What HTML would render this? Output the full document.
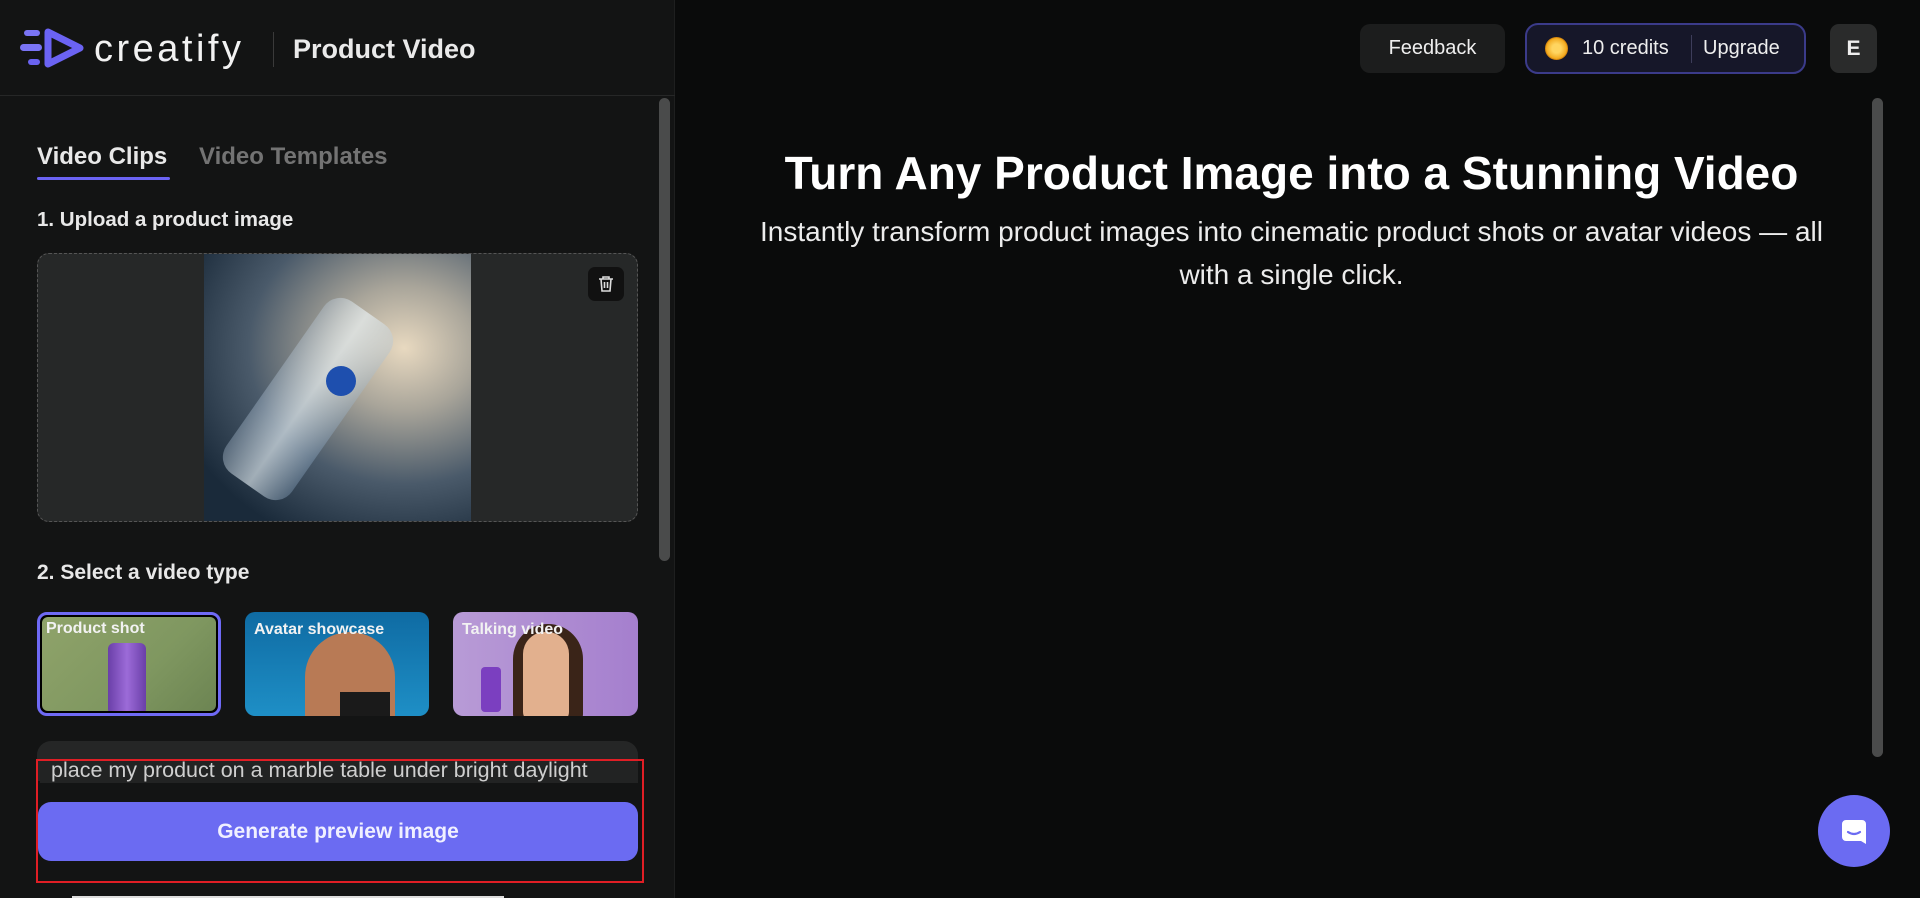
<!DOCTYPE html>
<html><head><meta charset="utf-8">
<style>
*{box-sizing:border-box;margin:0;padding:0}
body{width:1920px;height:898px;overflow:hidden;background:#0a0b0b;font-family:"Liberation Sans",sans-serif;color:#fff;position:relative}
.left{position:absolute;left:0;top:0;width:675px;height:898px;background:#131414;border-right:1px solid #1e1f1f}
.hdr{position:absolute;left:0;top:0;width:675px;height:96px;border-bottom:1px solid #262727}
.abs{position:absolute}
</style></head><body>
<div class="left">
 <div class="hdr">
  <svg class="abs" style="left:20px;top:28px" width="66" height="40" viewBox="0 0 66 40">
   <rect x="4" y="2" width="16" height="6" rx="3" fill="#7a74f5"/>
   <rect x="0" y="16" width="22" height="7" rx="3.5" fill="#7a74f5"/>
   <rect x="8" y="31" width="12" height="6" rx="3" fill="#6a63f0"/>
   <path d="M28 4 L60 20 L28 36 Z" fill="none" stroke="#6b63f3" stroke-width="7" stroke-linejoin="round"/>
  </svg>
  <div class="abs" style="left:94px;top:28px;font-size:38px;letter-spacing:3.5px;color:#f2f2f2">creatify</div>
  <div class="abs" style="left:273px;top:32px;width:1px;height:35px;background:#3a3a3a"></div>
  <div class="abs" style="left:293px;top:34px;font-size:27px;font-weight:bold;color:#eaeaea">Product Video</div>
 </div>
 <div class="abs" style="left:37px;top:143px;font-size:24px;font-weight:bold;color:#e8e8e8">Video Clips</div>
 <div class="abs" style="left:37px;top:177px;width:133px;height:3px;background:#6b63f3;border-radius:2px"></div>
 <div class="abs" style="left:199px;top:143px;font-size:24px;font-weight:bold;color:#737373">Video Templates</div>
 <div class="abs" style="left:37px;top:208px;font-size:20.5px;font-weight:bold;color:#e8e8e8">1. Upload a product image</div>
 <div class="abs" style="left:37px;top:253px;width:601px;height:269px;background:#262828;border:1.5px dashed #555;border-radius:12px;overflow:hidden">
  <div class="abs" style="left:166px;top:0;width:267px;height:269px;background:radial-gradient(ellipse at 75% 35%,#e8d9c0 0%,#a9a59a 25%,#4a5a6a 55%,#1a2a3a 85%);"></div>
  <div class="abs" style="left:230px;top:40px;width:80px;height:210px;transform:rotate(35deg);background:linear-gradient(90deg,rgba(200,220,240,.3),rgba(240,250,255,.6),rgba(160,190,220,.3));border-radius:20px"></div>
  <div class="abs" style="left:288px;top:112px;width:30px;height:30px;border-radius:50%;background:#1e4fae"></div>
  <div class="abs" style="left:550px;top:13px;width:36px;height:34px;border-radius:7px;background:#111"></div>
  <svg class="abs" style="left:559px;top:21px" width="18" height="18" viewBox="0 0 18 18" fill="none" stroke="#ddd" stroke-width="1.6"><path d="M2 4h14M6 4V2h6v2M4 4l1 12h8l1-12M7.5 7v6M10.5 7v6"/></svg>
 </div>
 <div class="abs" style="left:37px;top:561px;font-size:21px;font-weight:bold;color:#e8e8e8">2. Select a video type</div>
 <div class="abs" style="left:37px;top:612px;width:184px;height:104px;border:3px solid #6f6af5;border-radius:10px;padding:2px;background:#000">
  <div style="width:100%;height:100%;border-radius:6px;background:linear-gradient(135deg,#8fa36a,#7f9760 60%,#6c8452);position:relative;overflow:hidden">
   <div class="abs" style="left:66px;top:26px;width:38px;height:72px;border-radius:6px;background:linear-gradient(90deg,#6a3fa8,#9c6bd8,#6a3fa8)"></div>
   <div class="abs" style="left:4px;top:3px;font-size:16px;font-weight:bold;color:#f2f2f2">Product shot</div>
  </div>
 </div>
 <div class="abs" style="left:245px;top:612px;width:184px;height:104px;border-radius:10px;background:linear-gradient(180deg,#0f6ba3,#1e8fc6);overflow:hidden">
  <div class="abs" style="left:60px;top:20px;width:90px;height:90px;border-radius:45px 45px 0 0;background:#b87a55"></div>
  <div class="abs" style="left:95px;top:80px;width:50px;height:30px;background:#1a1a1a"></div>
  <div class="abs" style="left:9px;top:9px;font-size:16px;font-weight:bold;color:#f2f2f2">Avatar showcase</div>
 </div>
 <div class="abs" style="left:453px;top:612px;width:185px;height:104px;border-radius:10px;background:linear-gradient(90deg,#b89bd6,#a57fce);overflow:hidden">
  <div class="abs" style="left:60px;top:12px;width:70px;height:100px;border-radius:35px 35px 10px 10px;background:#3a2418"></div>
  <div class="abs" style="left:70px;top:20px;width:46px;height:90px;border-radius:22px 22px 10px 10px;background:#e2b08e"></div>
  <div class="abs" style="left:28px;top:55px;width:20px;height:45px;border-radius:4px;background:#7b3fc0"></div>
  <div class="abs" style="left:9px;top:9px;font-size:16px;font-weight:bold;color:#f2f2f2">Talking video</div>
 </div>
 <div class="abs" style="left:37px;top:741px;width:601px;height:40px;background:#252626;border-radius:14px 14px 0 0"></div>
 <div class="abs" style="left:40px;top:761px;width:598px;height:22px;background:#222323"></div>
 <div class="abs" style="left:51px;top:758px;font-size:21.5px;color:#cfcfcf">place my product on a marble table under bright daylight</div>
 <div class="abs" style="left:38px;top:802px;width:600px;height:59px;background:#6b6bf2;border-radius:13px;text-align:center;line-height:59px;font-size:21px;font-weight:bold;color:#f0f0ff">Generate preview image</div>
 <div class="abs" style="left:36px;top:759px;width:608px;height:124px;border:2px solid #e01e25"></div>
 <div class="abs" style="left:72px;top:896px;width:432px;height:2px;background:#ddd"></div>
 <div class="abs" style="left:659px;top:98px;width:11px;height:463px;background:#4a4b4b;border-radius:6px"></div>
</div>

<div class="abs" style="left:1360px;top:24px;width:145px;height:49px;background:#1c1d1d;border-radius:10px;text-align:center;line-height:49px;font-size:20px;color:#eee">Feedback</div>
<div class="abs" style="left:1525px;top:23px;width:281px;height:51px;background:#161729;border:2px solid #3b3b8a;border-radius:13px">
 <div class="abs" style="left:18px;top:12px;width:23px;height:23px;border-radius:50%;background:radial-gradient(circle,#ffd560 30%,#f2a81c 70%);border:1px solid #d88a10"></div>
 <div class="abs" style="left:55px;top:12px;font-size:20px;color:#eee">10 credits</div>
 <div class="abs" style="left:164px;top:10px;width:1px;height:28px;background:#3d3d5a"></div>
 <div class="abs" style="left:176px;top:12px;font-size:20px;color:#eee">Upgrade</div>
</div>
<div class="abs" style="left:1830px;top:24px;width:47px;height:49px;background:#2a2b2b;border-radius:9px;text-align:center;line-height:49px;font-size:21px;font-weight:bold;color:#eee">E</div>

<div class="abs" style="left:600px;top:146px;width:1383px;text-align:center;font-size:46px;font-weight:bold;color:#fff">Turn Any Product Image into a Stunning Video</div>
<div class="abs" style="left:600px;top:210px;width:1383px;text-align:center;font-size:28px;line-height:43px;color:#ececec">Instantly transform product images into cinematic product shots or avatar videos — all<br>with a single click.</div>

<div class="abs" style="left:1872px;top:98px;width:11px;height:659px;background:#4a4b4b;border-radius:6px"></div>
<div class="abs" style="left:1818px;top:795px;width:72px;height:72px;border-radius:50%;background:#6b6bf2"></div>
<svg class="abs" style="left:1838px;top:815px" width="32" height="32" viewBox="0 0 32 32"><path d="M8 5h16a4 4 0 0 1 4 4v20l-5-3H8a4 4 0 0 1-4-4V9a4 4 0 0 1 4-4z" fill="#fff"/><path d="M10 17q6 4 12 0" stroke="#6b6bf2" stroke-width="2.2" fill="none" stroke-linecap="round"/></svg>
</body></html>
